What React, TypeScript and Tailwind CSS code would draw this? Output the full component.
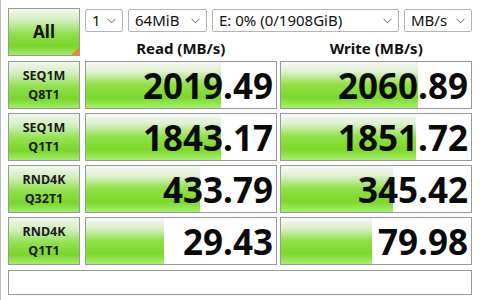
import React from "react";

type Row = { top: string; bottom: string; read: string; write: string; rw: number; ww: number };

const rows: Row[] = [
  { top: "SEQ1M", bottom: "Q8T1", read: "2019.49", write: "2060.89", rw: 71, ww: 72 },
  { top: "SEQ1M", bottom: "Q1T1", read: "1843.17", write: "1851.72", rw: 71, ww: 71 },
  { top: "RND4K", bottom: "Q32T1", read: "433.79", write: "345.42", rw: 60, ww: 59 },
  { top: "RND4K", bottom: "Q1T1", read: "29.43", write: "79.98", rw: 41, ww: 48 },
];

const btnBg =
  "bg-[linear-gradient(to_bottom,#f2f7ee_0%,#d2eebf_25%,#8fe04a_55%,#7ad52c_80%,#a2ec6a_100%)]";
const barBg =
  "bg-[linear-gradient(to_bottom,#f8f8f8_0%,#dcefcc_22%,#8fe046_50%,#7cd82c_78%,#a8f070_100%)]";

const Chevron = () => (
  <svg width="9" height="6" viewBox="0 0 9 6" className="shrink-0">
    <path d="M0.5 0.8 L4.5 4.8 L8.5 0.8" fill="none" stroke="#6b6b6b" strokeWidth="1" />
  </svg>
);

const Select = ({ label, w }: { label: string; w: string }) => (
  <div
    className={`${w} h-[23px] flex items-center justify-between pl-[6px] pr-[6px] border border-[#b4b4b4] rounded-[2px] bg-white text-[15px] leading-none text-[#111]`}
  >
    <span>{label}</span>
    <Chevron />
  </div>
);

const Cell = ({ value, pct }: { value: string; pct: number }) => (
  <div className="relative h-full flex-1 border border-[#9a9a9a] bg-white overflow-hidden">
    <div className={`absolute left-0 top-0 bottom-0 ${barBg}`} style={{ width: `${pct}%` }} />
    <div className="relative h-full flex items-center justify-end pr-[3px] text-[35px] font-bold leading-none text-[#0a0a0a]">
      {value}
    </div>
  </div>
);

export default function App() {
  return (
    <div
      className="w-[480px] h-[300px] bg-white border-l border-[#bdbdbd] pl-[7px] pr-[8px] pt-[8px] flex flex-col gap-[4px] overflow-hidden"
      style={{ fontFamily: '"Noto Sans", "Open Sans", sans-serif' }}
    >
      <div className="flex gap-[5px] h-[49px]">
        <div
          className={`relative w-[72px] h-[48px] shrink-0 border border-[#9a9a9a] ${btnBg} flex items-center justify-center text-[17px] font-bold text-[#111]`}
        >
          All
          <div className="absolute right-0 bottom-0 w-0 h-0 border-l-[8px] border-l-transparent border-b-[8px] border-b-[#f08a1c]" />
        </div>
        <div className="flex-1 flex flex-col">
          <div className="flex gap-[5px] pt-[1px]">
            <Select label="1" w="w-[38px]" />
            <Select label="64MiB" w="w-[79px]" />
            <Select label="E: 0% (0/1908GiB)" w="w-[187px]" />
            <Select label="MB/s" w="w-[68px]" />
          </div>
          <div className="flex gap-[4px] flex-1 items-center pt-[5px]">
            <div className="flex-1 text-center text-[15px] font-bold text-[#111]">Read (MB/s)</div>
            <div className="flex-1 text-center text-[15px] font-bold text-[#111]">Write (MB/s)</div>
          </div>
        </div>
      </div>
      {rows.map((r, i) => (
        <div key={i} className="flex gap-[5px] h-[48px]">
          <div
            className={`w-[72px] shrink-0 border border-[#9a9a9a] ${btnBg} flex flex-col items-center justify-center text-[12.5px] font-bold leading-[19px] text-[#1a1a1a]`}
          >
            <span>{r.top}</span>
            <span>{r.bottom}</span>
          </div>
          <div className="flex-1 flex gap-[3px]">
            <Cell value={r.read} pct={r.rw} />
            <Cell value={r.write} pct={r.ww} />
          </div>
        </div>
      ))}
      <div className="mt-[1px] h-[25px] border border-[#9a9a9a] bg-white" />
    </div>
  );
}
